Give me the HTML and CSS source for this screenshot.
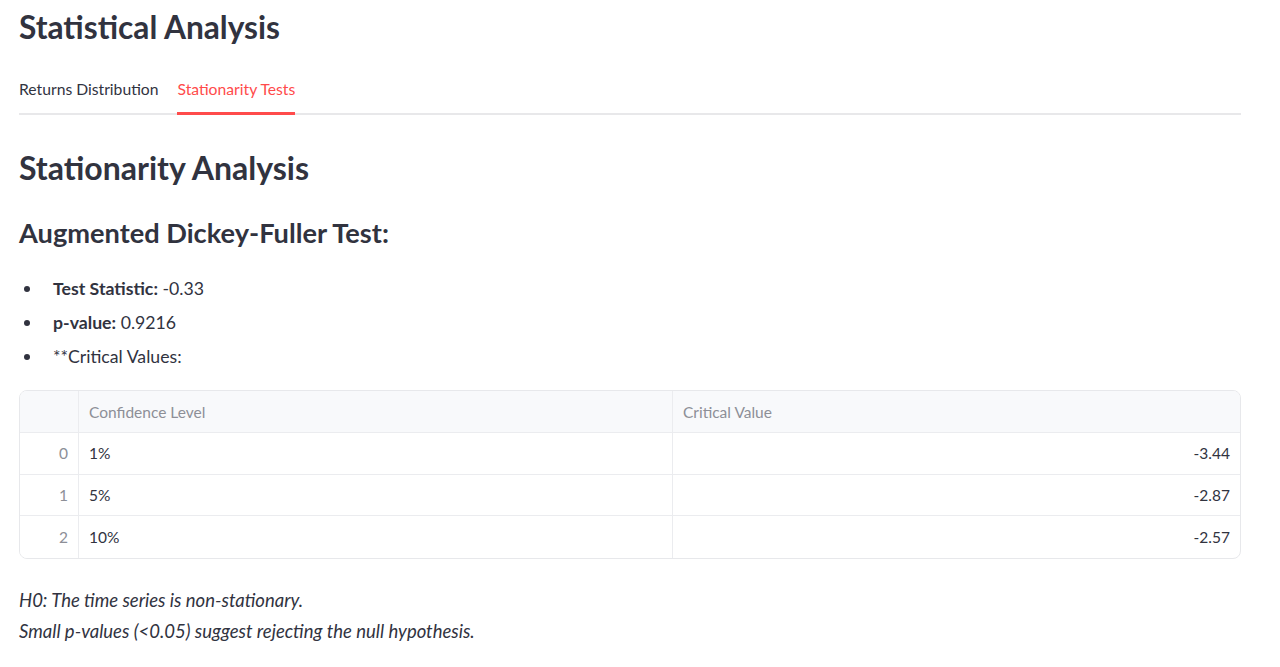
FILE: index.html
```html
<!DOCTYPE html>
<html lang="en">
<head>
<meta charset="utf-8">
<title>Statistical Analysis</title>
<link rel="stylesheet" href="styles.css">
</head>
<body>
<main class="main">
  <h1 class="title">Statistical Analysis</h1>
  <nav class="tabs">
    <div class="tab">Returns Distribution</div>
    <div class="tab tab-active">Stationarity Tests</div>
  </nav>
  <h2 class="header">Stationarity Analysis</h2>
  <h3 class="subheader">Augmented Dickey-Fuller Test:</h3>
  <ul class="bullets">
    <li><strong>Test Statistic:</strong> -0.33</li>
    <li><strong>p-value:</strong> 0.9216</li>
    <li>**Critical Values:</li>
  </ul>
  <div class="table">
    <div class="row head">
      <div class="cell idx"></div>
      <div class="cell">Confidence Level</div>
      <div class="cell">Critical Value</div>
    </div>
    <div class="row">
      <div class="cell idx">0</div>
      <div class="cell">1%</div>
      <div class="cell num">-3.44</div>
    </div>
    <div class="row">
      <div class="cell idx">1</div>
      <div class="cell">5%</div>
      <div class="cell num">-2.87</div>
    </div>
    <div class="row last">
      <div class="cell idx">2</div>
      <div class="cell">10%</div>
      <div class="cell num">-2.57</div>
    </div>
  </div>
  <p class="note"><em>H0: The time series is non-stationary.</em><br><em>Small p-values (&lt;0.05) suggest rejecting the null hypothesis.</em></p>
</main>
</body>
</html>
```
FILE: styles.css
```css
* { box-sizing: border-box; }
html, body { margin: 0; padding: 0; background: #ffffff; }
body {
  font-family: Lato, "Liberation Sans", sans-serif;
  color: #31333f;
}
.main {
  width: 1222px;
  margin-left: 19px;
  padding-top: 7px;
}
.title {
  margin: 0;
  font-size: 31.7px;
  line-height: 40px;
  font-weight: 700;
}
.tabs {
  display: flex;
  gap: 19px;
  margin-top: 32px;
  box-shadow: inset 0 -2px 0 #e8e8ea;
}
.tab {
  font-size: 15.7px;
  line-height: 20px;
  padding-bottom: 13px;
  border-bottom: 3px solid transparent;
}
.tab-active {
  color: #ff4b4b;
  border-bottom-color: #ff4b4b;
}
.header {
  margin: 33px 0 0;
  font-size: 32px;
  line-height: 40px;
  font-weight: 700;
}
.subheader {
  margin: 28px 0 0;
  font-size: 27.2px;
  line-height: 34px;
  font-weight: 700;
}
.bullets {
  list-style: none;
  margin: 22px 0 0;
  padding: 0;
}
.bullets li {
  position: relative;
  padding-left: 34px;
  font-size: 17.7px;
  line-height: 34px;
}
.bullets li::before {
  content: "";
  position: absolute;
  left: 5px;
  top: 14px;
  width: 6px;
  height: 6px;
  border-radius: 50%;
  background: #31333f;
}
.bullets strong { font-weight: 700; }
.table {
  margin-top: 16px;
  border: 1px solid #e7e8eb;
  border-radius: 8px;
  overflow: hidden;
  font-size: 15.5px;
}
.row {
  display: grid;
  grid-template-columns: 59px 594px 1fr;
  height: 41.5px;
  border-bottom: 1px solid #ebecef;
}
.row.last { border-bottom: none; }
.row.head {
  height: 42px;
  background: #f8f9fb;
  color: #8d8f97;
}
.cell {
  display: flex;
  align-items: center;
  padding: 0 10px;
  border-right: 1px solid #ebecef;
}
.cell:last-child { border-right: none; }
.cell.idx {
  justify-content: flex-end;
  color: #8d8f97;
  background: #f8f9fb;
}
.row:not(.head) .cell.idx { background: #ffffff; }
.cell.num { justify-content: flex-end; }
.note {
  margin: 26px 0 0;
  font-size: 18.5px;
  line-height: 31px;
}
```
